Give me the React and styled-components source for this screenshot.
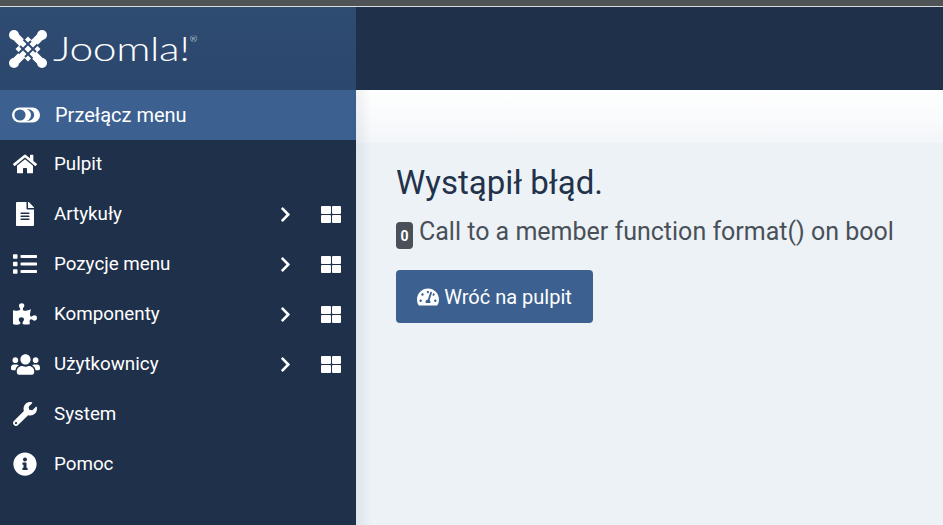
import React from 'react';
import styled, { createGlobalStyle } from 'styled-components';
import {
  FaHome,
  FaFileAlt,
  FaList,
  FaPuzzlePiece,
  FaUsers,
  FaWrench,
  FaInfoCircle,
  FaChevronRight,
  FaTachometerAlt,
} from 'react-icons/fa';

const GlobalStyle = createGlobalStyle`
  html, body {
    margin: 0;
    padding: 0;
    height: 100%;
    overflow: hidden;
    background: #edf2f7;
    font-family: Roboto, "Liberation Sans", sans-serif;
  }
`;

const Page = styled.div`
  width: 943px;
  height: 525px;
  display: flex;
  flex-direction: column;
  overflow: hidden;
`;

const BrowserEdge = styled.div`
  height: 6px;
  flex: none;
  background: #4f5356;
  border-bottom: 1px solid #d9dcde;
`;

const Shell = styled.div`
  flex: 1;
  display: flex;
  min-height: 0;
`;

const Sidebar = styled.aside`
  width: 356px;
  flex: none;
  background: #1f304a;
  display: flex;
  flex-direction: column;
`;

const Brand = styled.div`
  height: 83px;
  flex: none;
  display: flex;
  align-items: center;
  gap: 6px;
  padding-left: 9px;
  background: linear-gradient(180deg, #2e4b72, #2c476c);
`;

const Wordmark = styled.span`
  position: relative;
  display: inline-block;
  color: #fff;
  font-family: Lato, Roboto, sans-serif;
  font-weight: 300;
  font-size: 33px;
  line-height: 1;
  letter-spacing: -0.3px;
  transform: scaleX(1.29);
  transform-origin: left center;
`;

const Registered = styled.span`
  position: absolute;
  top: 4px;
  right: -6px;
  font-size: 7px;
  letter-spacing: 0;
`;

const MenuToggle = styled.div`
  height: 50px;
  flex: none;
  display: flex;
  align-items: center;
  gap: 15px;
  padding-left: 12px;
  background: #3c6090;
  color: #fff;
  font-size: 20px;
`;

const MenuList = styled.nav`
  display: flex;
  flex-direction: column;
  margin-top: -1px;
`;

const MenuRow = styled.div`
  height: 50px;
  display: flex;
  align-items: center;
  color: #fff;
  font-size: 18.8px;
`;

const IconSlot = styled.span`
  width: 54px;
  flex: none;
  display: flex;
  justify-content: center;
  padding-right: 4px;
  box-sizing: border-box;
  font-size: ${(p) => p.$size || 24}px;
  line-height: 0;
`;

const Label = styled.span`
  flex: 1;
  margin-bottom: 1px;
`;

const Chevron = styled.span`
  display: flex;
  font-size: 17px;
  margin-right: 27px;
`;

const QuadIcon = styled.span`
  width: 20px;
  height: 17px;
  margin-right: 15px;
  display: grid;
  grid-template-columns: 1fr 1fr;
  grid-template-rows: 1fr 1fr;
  gap: 1px;
  & > i {
    display: block;
    background: #fff;
    border-radius: 1px;
  }
`;

const Main = styled.main`
  flex: 1;
  min-width: 0;
  display: flex;
  flex-direction: column;
  position: relative;
`;

const TopBar = styled.header`
  height: 83px;
  flex: none;
  background: #1f304a;
`;

const Toolbar = styled.div`
  height: 53px;
  flex: none;
  background: linear-gradient(180deg, #ffffff 0%, #f3f6f9 100%);
  box-shadow: 0 2px 4px rgba(32, 50, 80, 0.08);
`;

const Content = styled.section`
  flex: 1;
  padding: 21px 40px;
  background: #edf2f7;
`;

const SidebarShade = styled.div`
  position: absolute;
  left: 0;
  top: 83px;
  bottom: 0;
  width: 16px;
  background: linear-gradient(90deg, rgba(32, 50, 80, 0.07), rgba(32, 50, 80, 0));
  pointer-events: none;
`;

const Heading = styled.h1`
  margin: 0 0 12px;
  font-size: 33px;
  font-weight: 400;
  line-height: 38px;
  color: #22324a;
`;

const Message = styled.p`
  margin: 0 0 20px;
  display: flex;
  align-items: center;
  gap: 6px;
  font-size: 25px;
  line-height: 36px;
  color: #495057;
`;

const Code = styled.span`
  width: 17px;
  height: 27px;
  margin-top: 7px;
  display: flex;
  align-items: center;
  justify-content: center;
  border-radius: 4px;
  background: #495057;
  color: #fff;
  font-size: 14px;
  font-weight: 700;
`;

const BackButton = styled.button`
  width: 197px;
  height: 53px;
  display: flex;
  align-items: center;
  justify-content: center;
  gap: 5px;
  border: 0;
  border-radius: 4px;
  background: #3c6090;
  color: #fff;
  font-family: inherit;
  font-size: 20px;
  & > svg {
    font-size: 22px;
  }
`;

const ToggleIcon = () => (
  <svg width="28" height="16" viewBox="0 0 28 16">
    <rect x="0" y="0.5" width="28" height="15" rx="7.5" fill="#fff" />
    <circle cx="16.5" cy="8" r="5.7" fill="#3c6090" />
    <circle cx="13" cy="8" r="6" fill="#fff" />
    <circle cx="8" cy="8" r="5.6" fill="#3c6090" />
  </svg>
);

const JoomlaMark = () => (
  <svg width="38" height="38" viewBox="0 0 38 38" fill="none">
    <path d="M5 5 L33 33 M33 5 L5 33" stroke="#fff" strokeWidth="8" />
    <path d="M19 6.5 L31.5 19 L19 31.5 L6.5 19 Z" fill="#fff" />
    {/* thin dark cuts that make the bands read as woven */}
    {[0, 90, 180, 270].map((angle) => (
      <path
        key={angle}
        d="M14.5 9.5 L27 22"
        stroke="#2d4a70"
        strokeWidth="1.9"
        transform={`rotate(${angle} 19 19)`}
      />
    ))}
    <circle cx="5" cy="5" r="5" fill="#fff" />
    <circle cx="33" cy="5" r="5" fill="#fff" />
    <circle cx="5" cy="33" r="5" fill="#fff" />
    <circle cx="33" cy="33" r="5" fill="#fff" />
  </svg>
);

const items = [
  { label: 'Pulpit', Icon: FaHome },
  { label: 'Artykuły', Icon: FaFileAlt, more: true },
  { label: 'Pozycje menu', Icon: FaList, more: true },
  { label: 'Komponenty', Icon: FaPuzzlePiece, more: true },
  { label: 'Użytkownicy', Icon: FaUsers, more: true, size: 29 },
  { label: 'System', Icon: FaWrench },
  { label: 'Pomoc', Icon: FaInfoCircle },
];

const App = () => (
  <Page>
    <GlobalStyle />
    <BrowserEdge />
    <Shell>
      <Sidebar>
        <Brand>
          <JoomlaMark />
          <Wordmark>
            Joomla!
            <Registered>®</Registered>
          </Wordmark>
        </Brand>
        <MenuToggle>
          <ToggleIcon />
          Przełącz menu
        </MenuToggle>
        <MenuList>
          {items.map(({ label, Icon, more, size }) => (
            <MenuRow key={label}>
              <IconSlot $size={size}>
                <Icon />
              </IconSlot>
              <Label>{label}</Label>
              {more && (
                <>
                  <Chevron>
                    <FaChevronRight />
                  </Chevron>
                  <QuadIcon>
                    <i />
                    <i />
                    <i />
                    <i />
                  </QuadIcon>
                </>
              )}
            </MenuRow>
          ))}
        </MenuList>
      </Sidebar>
      <Main>
        <TopBar />
        <Toolbar />
        <Content>
          <Heading>Wystąpił błąd.</Heading>
          <Message>
            <Code>0</Code>
            Call to a member function format() on bool
          </Message>
          <BackButton>
            <FaTachometerAlt />
            Wróć na pulpit
          </BackButton>
        </Content>
        <SidebarShade />
      </Main>
    </Shell>
  </Page>
);

export default App;
